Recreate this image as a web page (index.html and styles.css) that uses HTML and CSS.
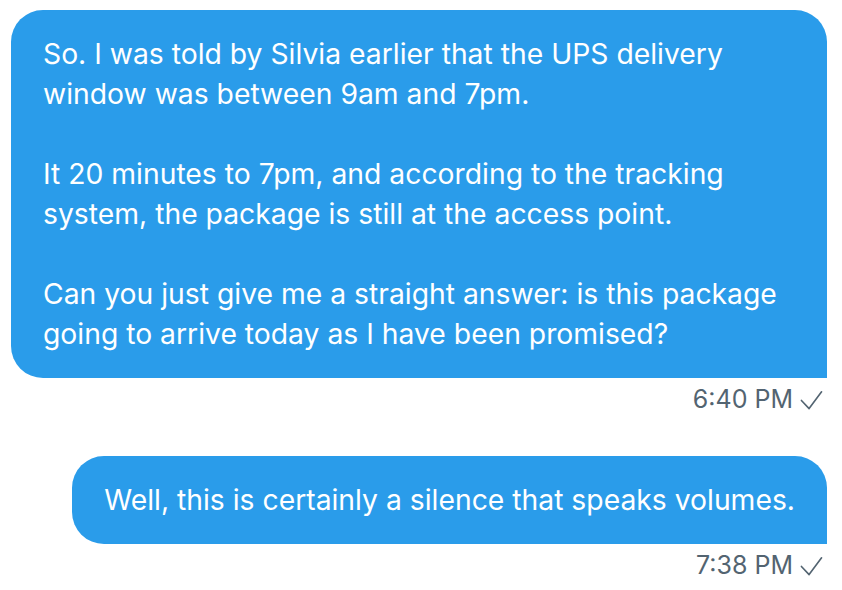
FILE: index.html
```html
<!DOCTYPE html>
<html>
<head>
<meta charset="utf-8">
<link rel="stylesheet" href="styles.css">
</head>
<body>
<div class="thread">
  <div class="msg">
    <div class="bubble bubble-full">So. I was told by Silvia earlier that the UPS delivery<br>window was between 9am and 7pm.<br><br>It 20 minutes to 7pm, and according to the tracking<br>system, the package is still at the access point.<br><br>Can you just give me a straight answer: is this package<br>going to arrive today as I have been promised?</div>
    <div class="meta">6:40 PM <svg class="check" viewBox="0 0 24 24" width="23" height="23"><path d="M1.5 13 L9.5 21.5 L22.5 4" fill="none" stroke="#536471" stroke-width="1.7" stroke-linecap="round" stroke-linejoin="round"/></svg></div>
  </div>
  <div class="msg">
    <div class="bubble">Well, this is certainly a silence that speaks volumes.</div>
    <div class="meta">7:38 PM <svg class="check" viewBox="0 0 24 24" width="23" height="23"><path d="M1.5 13 L9.5 21.5 L22.5 4" fill="none" stroke="#536471" stroke-width="1.7" stroke-linecap="round" stroke-linejoin="round"/></svg></div>
  </div>
</div>
</body>
</html>
```
FILE: styles.css
```css
html, body {
  margin: 0;
  padding: 0;
  background: #ffffff;
}
.thread {
  display: flex;
  flex-direction: column;
  gap: 41px;
  padding: 10px 15px 0 11px;
  font-family: Inter, "Noto Sans", sans-serif;
}
.msg {
  display: flex;
  flex-direction: column;
  align-items: flex-end;
}
.bubble {
  background: #2a9cea;
  color: #ffffff;
  font-size: 28.3px;
  line-height: 40px;
  padding: 24px 32px;
  border-radius: 32px 32px 0 32px;
  white-space: nowrap;
}
.bubble-full {
  align-self: stretch;
}
.meta {
  display: flex;
  align-items: center;
  gap: 7px;
  margin-top: 5px;
  color: #536471;
  font-size: 25px;
  line-height: 32px;
  padding-right: 4px;
}
.check {
  display: block;
}
```
